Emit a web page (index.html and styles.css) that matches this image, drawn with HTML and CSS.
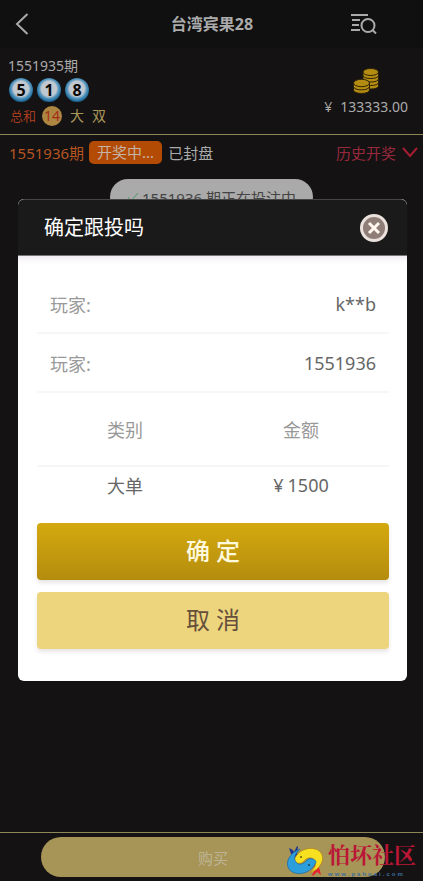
FILE: index.html
```html
<!DOCTYPE html>
<html lang="zh-CN">
<head>
<meta charset="utf-8">
<meta name="viewport" content="width=device-width, initial-scale=1">
<title>台湾宾果28</title>
<link rel="stylesheet" href="styles.css">
</head>
<body>
<div class="app">
  <header class="topbar">
    <button class="icon-btn" type="button" aria-label="返回">
      <svg width="14" height="22" viewBox="0 0 14 22" fill="none" stroke="#aaa" stroke-width="2"><path d="M12.500 1 2 11l10.500 10"/></svg>
    </button>
    <h1 class="title">台湾宾果28</h1>
    <button class="icon-btn search" type="button" aria-label="查询记录">
      <svg width="26" height="21" viewBox="0 0 26 21" fill="none" stroke="#aaa" stroke-width="2"><path d="M0 1h17M1 6h8M1 11h7M0 16h9"/><circle cx="17" cy="11.500" r="6.500"/><path d="m21.500 16 3.500 3.500"/></svg>
    </button>
  </header>

  <section class="status">
    <div class="last">
      <div class="issue">1551935期</div>
      <div class="balls"><span class="ball">5</span><span class="ball">1</span><span class="ball">8</span></div>
      <div class="result"><span class="sum-label">总和</span><span class="sum">14</span><span>大</span><span>双</span></div>
    </div>
    <div class="wallet">
      <svg width="26" height="26" viewBox="0 0 26 26" fill="#b58c12" stroke="#2a2206" stroke-width="1">
        <path d="M10 4v14c0 4 15.500 4 15.500 0V4z"/><path d="M10 7.500c0 4 15.500 4 15.500 0m-15.500 3.500c0 4 15.500 4 15.500 0m-15.500 3.500c0 4 15.500 4 15.500 0" fill="none"/><ellipse cx="17.750" cy="4" rx="7.750" ry="3.500"/>
        <path d="M.5 15v7c0 4.500 16 4.500 16 0v-7z"/><path d="M.5 18.500c0 4.500 16 4.500 16 0" fill="none"/><ellipse cx="8.500" cy="15" rx="8" ry="3.700"/>
      </svg>
      <div class="balance"><span>¥</span><span>133333.00</span></div>
    </div>
  </section>

  <section class="current">
    <span class="now">1551936期</span>
    <span class="badge">开奖中...</span>
    <span class="closed">已封盘</span>
    <a class="history" href="#history">历史开奖
      <svg width="16" height="11" viewBox="0 0 16 11" fill="none" stroke="#a51d30" stroke-width="2"><path d="m1 1 7 8 7-8"/></svg>
    </a>
  </section>

  <main class="feed">
    <div class="notice"><svg width="12" height="10" viewBox="0 0 12 10" fill="none" stroke="#4b9b68" stroke-width="1"><path d="m1 5 3 4 7-8"/></svg>1551936 期正在投注中</div>
  </main>

  <footer class="footer">
    <button class="buy" type="button">购买</button>
    <div class="brand">
      <svg width="38" height="34" viewBox="0 0 38 34">
        <path d="M9 13 5 10 3 4l4 2 1 2 3-6 1 1-1 7 1 2z" fill="#20378d"/>
        <path d="m28 22 6-5 2 1-3 5 2 8-4-3-4 4-1-1 3-6z" fill="#e32431"/>
        <g stroke-width=".7">
          <path d="M8 16C12 6 22 3 29 5c8 2 9 10 6 15-2 4-6 7-11 9 5-5 7-9 4-13-3-4-8-2-11 2-3 2-8 2-9-2z" fill="#f7e01f" stroke="#b3861c"/>
          <path d="M30 18C26 28 16 31 9 29 1 27 0 19 3 14c2-4 6-7 11-9-5 5-7 9-4 13 3 4 8 2 11-2 3-2 8-2 9 2z" fill="#2d9edc" stroke="#1966a2"/>
        </g>
        <circle cx="15" cy="13" r=".8"/><circle cx="23" cy="21" r=".8"/>
      </svg>
      <div class="brand-text"><strong>怕坏社区</strong><span>www.pahuai.com</span></div>
    </div>
  </footer>
</div>

<div class="overlay">
  <section class="dialog" role="dialog" aria-modal="true" aria-labelledby="dialog-title">
    <header class="dialog-head">
      <h2 id="dialog-title">确定跟投吗</h2>
      <button class="close" type="button" aria-label="关闭"><svg width="14" height="14" viewBox="0 0 14 14" stroke="#fff6ed" stroke-width="3"><path d="m2 2 10 10M12 2 2 12"/></svg></button>
    </header>
    <div class="dialog-body">
      <dl class="info">
        <div><dt>玩家:</dt><dd>k**b</dd></div>
        <div><dt>玩家:</dt><dd>1551936</dd></div>
      </dl>
      <table class="bets">
        <thead><tr><th scope="col">类别</th><th scope="col">金额</th></tr></thead>
        <tbody><tr><td>大单</td><td><span class="yen">¥</span>1500</td></tr></tbody>
      </table>
      <div class="actions">
        <button class="action confirm" type="button">确 定</button>
        <button class="action cancel" type="button">取 消</button>
      </div>
    </div>
  </section>
</div>
</body>
</html>
```

FILE: styles.css
```css
* { box-sizing: border-box; }
body {
  margin: 0;
  background: #141213;
  color: #aaa;
  font-family: "Noto Sans", "Noto Sans CJK SC", sans-serif;
  font-size: 14px;
}
button { padding: 0; border: 0; background: none; font: inherit; color: inherit; }
h1, h2, dl, dd { margin: 0; }
svg { display: block; flex: none; }

.app { display: flex; flex-direction: column; min-height: 100vh; }
.topbar {
  display: grid;
  grid-template-columns: 1fr auto 1fr;
  align-items: center;
  height: 48px;
  padding: 0 46px 0 15px;
  background: #101010;
}
.title { padding-left: 32px; font-size: 16px; line-height: 24px; }
.icon-btn { justify-self: start; }
.search { justify-self: end; }

.status {
  display: flex;
  justify-content: space-between;
  padding: 8px 15px 7px 8px;
  border-bottom: 1px solid #8b8958;
}
.issue { line-height: 20px; }
.balls { display: flex; gap: 4px; padding: 2px 1px 3px; }
.ball {
  width: 24px;
  height: 24px;
  border-radius: 50%;
  background: radial-gradient(circle at 50% 45%, #c2c8d0 0 42%, #5897be 54%, #1c6798 70%);
  color: #080808;
  font-size: 16px;
  font-weight: 700;
  line-height: 24px;
  text-align: center;
}
.result { display: flex; align-items: center; gap: 8px; padding-left: 2px; color: #a99659; line-height: 22px; }
.sum-label { margin-right: -2px; color: #a63c1d; font-size: 13px; }
.sum { width: 20px; height: 20px; border-radius: 50%; background: #ad8742; color: #a52b18; line-height: 20px; text-align: center; }
.wallet { display: flex; flex-direction: column; align-items: center; gap: 3px; padding-top: 12px; }
.balance { display: flex; gap: 8px; line-height: 20px; }

.current { display: flex; align-items: center; height: 34px; padding: 0 5px 0 9px; font-size: 15px; }
.now { color: #b65520; }
.badge { margin: 0 6px 0 5px; padding: 0 8px; border-radius: 5px; background: #b44b05; color: #c5b4a5; line-height: 23px; }
.history { display: flex; align-items: center; gap: 6px; margin-left: auto; color: #98283c; text-decoration: none; }

.feed { flex: 1; padding-top: 10px; }
.notice {
  display: flex;
  align-items: center;
  justify-content: center;
  gap: 3px;
  width: 48%;
  height: 36px;
  margin: 0 auto;
  border-radius: 18px;
  background: #aaa;
  color: #444;
  font-size: 15px;
}

.footer { position: relative; padding: 4px 38px 4px 41px; border-top: 1px solid #8b8958; }
.buy { width: 100%; height: 40px; border-radius: 20px; background: #a79457; color: #bdb495; font-size: 15px; }
.brand { position: absolute; right: 7px; bottom: 3px; display: flex; align-items: flex-end; gap: 4px; }
.brand-text { display: flex; flex-direction: column; font-family: "Noto Sans CJK SC", sans-serif; }
.brand strong { color: #ba1636; font-family: "Noto Serif CJK SC", "Noto Sans CJK SC", serif; font-size: 22px; line-height: 32px; }
.brand span { color: #3e6e9c; font-family: "Liberation Sans", sans-serif; font-size: 6px; font-weight: 700; letter-spacing: 2px; line-height: 8px; }

.overlay { position: fixed; inset: 0; padding: 199px 16px 0 18px; }
.dialog { overflow: hidden; border-radius: 6px; background: #fff; }
.dialog-head {
  display: flex;
  align-items: center;
  justify-content: space-between;
  height: 57px;
  padding: 0 19px 0 26px;
  border: 1px solid #454545;
  border-width: 1px 0;
  border-bottom-color: #777;
  border-radius: 6px 6px 0 0;
  background: #1b1a1a;
  color: #fff;
}
.dialog-head h2 { font-size: 20px; font-weight: 400; line-height: 28px; }
.close { display: grid; place-items: center; width: 28px; height: 28px; border: 3px solid #eae1dc; border-radius: 50%; background: #8f7e78; }
.dialog-body { padding: 19px 18px 32px 19px; box-shadow: inset 0 8px 6px -5px #eeeaf0; color: #666; font-size: 18px; }
.info div { display: flex; align-items: center; justify-content: space-between; height: 59px; padding: 0 13px; border-bottom: 2px solid #f8f5f7; }
.info dt, .bets th { color: #999; font-weight: 400; }
.bets { width: 100%; border-collapse: collapse; table-layout: fixed; }
.bets th, .bets td { padding: 0; text-align: center; }
.bets th { height: 73px; border-bottom: 2px solid #f8f5f7; }
.bets td { height: 36px; }
.yen { margin-right: 4px; }
.actions { display: grid; gap: 12px; margin-top: 21px; }
.action { height: 57px; border-radius: 4px; box-shadow: 0 3px 4px #e9e5e5; font-size: 24px; line-height: 56px; padding-bottom: 1px; }
.confirm { background: linear-gradient(#d4a90f, #b48d0e); color: #fff9dd; font-weight: 500; }
.cancel { background: #edd57e; color: #66503b; }
```
